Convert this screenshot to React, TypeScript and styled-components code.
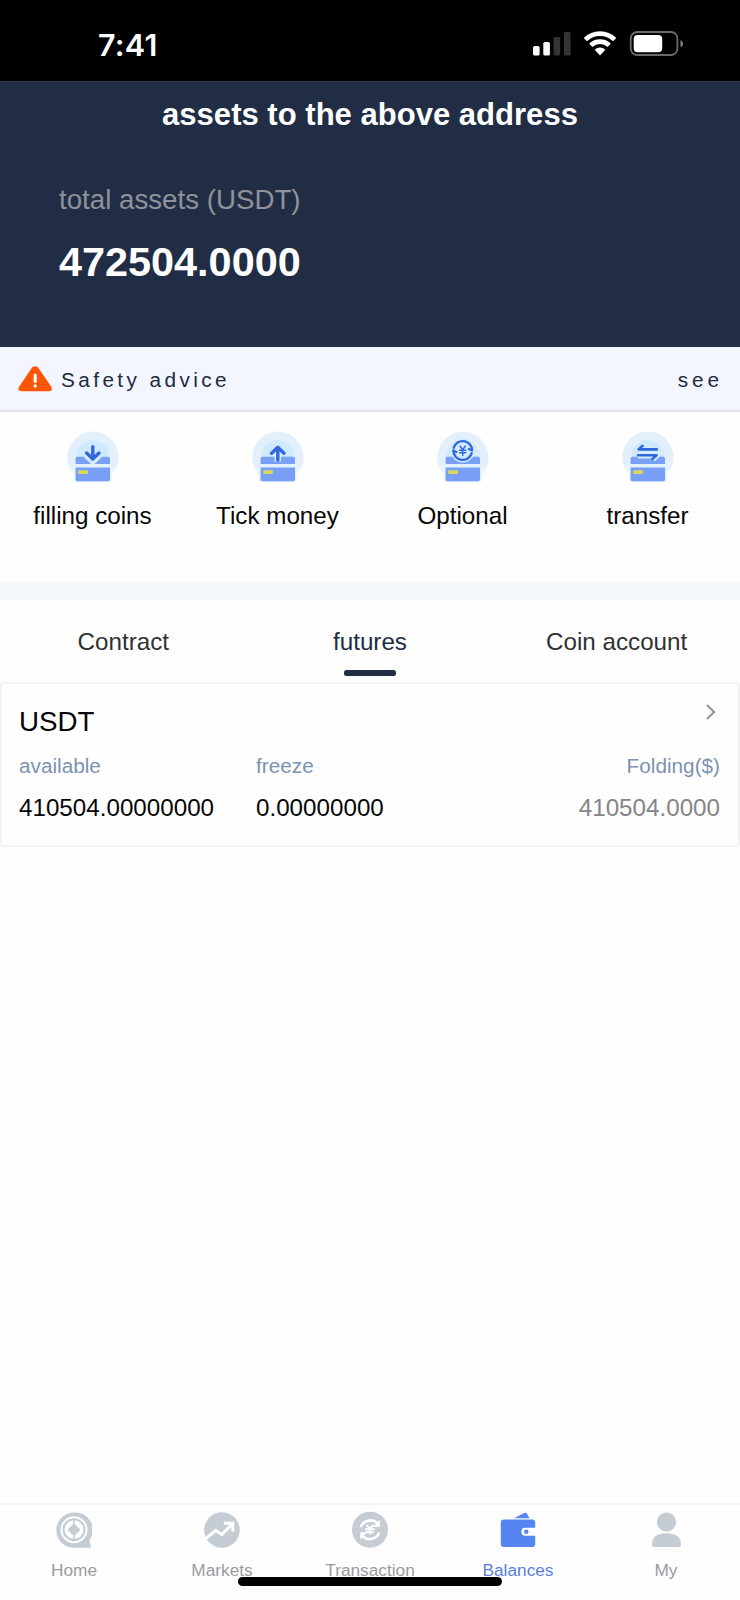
import React from "react";
import styled, { createGlobalStyle } from "styled-components";

const GlobalStyle = createGlobalStyle`
  * { box-sizing: border-box; }
  body {
    margin: 0;
    background: #fefefe;
    font-family: "Liberation Sans", Arial, sans-serif;
    -webkit-font-smoothing: antialiased;
  }
`;

const Screen = styled.div`
  width: 740px;
  height: 1600px;
  display: flex;
  flex-direction: column;
  overflow: hidden;
  background: #fefefe;
`;

const StatusBar = styled.div`
  height: 81px;
  flex: none;
  display: flex;
  justify-content: space-between;
  padding: 25px 55px 0 98px;
  background: #000;
`;

const Clock = styled.div`
  font: 600 30.5px/39px Inter, sans-serif;
  letter-spacing: 0.3px;
  color: #fff;
`;

const StatusIcons = styled.div`
  display: flex;
  padding-top: 5px;
  gap: 11px;
`;

const Header = styled.header`
  height: 266px;
  flex: none;
  background: #212d44;
  border-top: 1px solid #2d3344;
`;

const Title = styled.h1`
  margin: 0;
  font-size: 31.05px;
  line-height: 65px;
  font-weight: 700;
  text-align: center;
  color: #fff;
`;

const Total = styled.div`
  padding: 32px 59px 0;
`;

const TotalLabel = styled.div`
  font-size: 27.7px;
  line-height: 42px;
  color: #8f929b;
`;

const TotalValue = styled.div`
  margin-top: 11px;
  font-size: 41.4px;
  line-height: 60px;
  font-weight: 700;
  color: #fff;
`;

const Advice = styled.div`
  height: 65px;
  flex: none;
  display: flex;
  align-items: center;
  padding: 3px 17px 0 18px;
  background: #f3f5ff;
  border-bottom: 2px solid #e1e2e6;
  font-size: 20.75px;
  color: #212b40;

  svg { margin-bottom: 2px; }
`;

const AdviceText = styled.span`
  flex: 1;
  padding-left: 8px;
  letter-spacing: 3.42px;
`;

const AdviceLink = styled.span`
  letter-spacing: 3.9px;
`;

const Actions = styled.div`
  height: 170px;
  flex: none;
  display: grid;
  grid-template-columns: repeat(4, 1fr);
  padding-top: 17px;
`;

const Action = styled.div`
  display: flex;
  flex-direction: column;
  align-items: center;
  font-size: 24.2px;
  line-height: 34px;
  color: #060606;
  gap: 14px;
`;

const Strip = styled.div`
  height: 18px;
  flex: none;
  background: #f3f7fa;
`;

const Tabs = styled.div`
  height: 82px;
  flex: none;
  display: grid;
  grid-template-columns: repeat(3, 1fr);
`;

const Tab = styled.div<{ $active?: boolean }>`
  display: flex;
  flex-direction: column;
  align-items: center;
  padding-top: 25px;
  font-size: 24.2px;
  line-height: 34px;
  color: ${(p) => (p.$active ? "#212d44" : "#303133")};

  &::after {
    content: "";
    width: 52px;
    height: 6px;
    margin-top: 11px;
    border-radius: 2.5px;
    background: ${(p) => (p.$active ? "#212d44" : "transparent")};
  }
`;

const Card = styled.section`
  height: 165px;
  flex: none;
  padding: 19px 18px 0 17px;
  border: 2px solid #f3f3f4;
  border-radius: 4px;
`;

const CardHead = styled.div`
  display: flex;
  justify-content: space-between;
  height: 41.5px;
  font-size: 27.7px;
  line-height: 38px;
  color: #060606;

  svg { margin: -1px 3px 0 0; }
`;

const Figures = styled.div`
  display: grid;
  grid-template-columns: 237px 1fr auto;
`;

const Figure = styled.div<{ $end?: boolean }>`
  font-size: 24.2px;
  line-height: 42px;
  text-align: ${(p) => (p.$end ? "right" : "left")};
  color: ${(p) => (p.$end ? "#858587" : "#060606")};
`;

const FigureLabel = styled.div`
  font-size: 20.75px;
  color: #7d93b0;
`;

const Nav = styled.nav`
  height: 97px;
  flex: none;
  margin-top: auto;
  position: relative;
  display: grid;
  grid-template-columns: repeat(5, 1fr);
  border-top: 2px solid #f3f4f5;
`;

const NavItem = styled.div<{ $active?: boolean }>`
  display: flex;
  flex-direction: column;
  align-items: center;
  padding-top: 6px;
  gap: 10.5px;
  font-size: 17.25px;
  line-height: 20px;
  color: ${(p) => (p.$active ? "#5a7fe0" : "#9b9b9e")};
`;

const HomeIndicator = styled.div`
  position: absolute;
  left: 238px;
  bottom: 14px;
  width: 264px;
  height: 9px;
  border-radius: 5px;
  background: #000;
`;

const Signal = () => (
  <svg width="40" height="28" viewBox="0 0 40 28">
    <rect x="1" y="16" width="6.6" height="9.5" rx="1.6" fill="#fff" />
    <rect x="11.3" y="12" width="6.6" height="13.5" rx="1.6" fill="#fff" />
    <rect x="21.6" y="7" width="6.6" height="18.5" rx="1.6" fill="#343434" />
    <rect x="32" y="2" width="6.6" height="23.5" rx="1.6" fill="#343434" />
  </svg>
);

const Wifi = () => (
  <svg width="34" height="28" viewBox="0 0 34 28">
    <g fill="none" stroke="#fff" strokeWidth="4.7">
      <path d="M2.3 9.6a21 21 0 0 1 29.4 0" />
      <path d="M7.8 15.3a13.2 13.2 0 0 1 18.4 0" />
    </g>
    <path d="M11.7 19.7a7.7 7.7 0 0 1 10.6 0L17 25.4z" fill="#fff" />
  </svg>
);

const Battery = () => (
  <svg width="57" height="28" viewBox="0 0 57 28">
    <rect x="2.7" y="2" width="46.7" height="23" rx="6.5" fill="none" stroke="#6b6b6b" strokeWidth="1.8" />
    <rect x="5.7" y="5" width="28.5" height="17.3" rx="4" fill="#fff" />
    <path d="M52.5 10.300c3.500 1.200 3.500 5.800 0 7z" fill="#7c7c7c" />
  </svg>
);

const Warning = () => (
  <svg width="35" height="26" viewBox="0 0 35 26">
    <path d="M14 1.6q3-2.8 6 0L33.1 20.5q2.3 4.5-2.6 4.7H3.8q-5.2-.2-2.5-4.7z" fill="#fb5607" />
    <path d="M17.2 9v6.5" stroke="#fff" strokeWidth="3.1" strokeLinecap="round" />
    <circle cx="17.2" cy="20" r="1.7" fill="#fff" />
  </svg>
);

type Kind = "down" | "up" | "yen" | "swap";

const ActionIcon = ({ kind }: { kind: Kind }) => {
  const glyphs: Record<Kind, React.ReactNode> = {
    down: <path d="M28.4 17.8v12M22.2 24l6.2 6 6.2-6" />,
    up: <path d="M28.4 31V18.3M22.2 24.2l6.2-6 6.2 6" />,
    yen: (
      <>
        <path d="M19.3 18.8A9.4 9.4 0 0 1 37.7 21.5L34.6 20M37.3 24.2A9.4 9.4 0 0 1 18.9 21.5L22 23" strokeWidth="2.3" />
        <path d="M25.7 17.2l2.6 3.4 2.6-3.4M28.3 20.6v5.9M25.2 21.3h6.2M25.2 23.8h6.2" strokeWidth="1.5" />
      </>
    ),
    swap: <path d="M37.5 20.4H19.2l4-3.6M18.7 26.3H37.2l-4 3.4" strokeWidth="2.6" />,
  };
  const halos: Record<Kind, React.ReactNode> = {
    down: <path d="M21.4 25.5l7 6.7 7-6.7" />,
    up: <path d="M28.4 25v7.5" />,
    yen: <circle cx="28.3" cy="21.5" r="12" fill="#d3ebff" stroke="none" />,
    swap: <path d="M18.5 26.3h18.7l-4 3.6" />,
  };
  const id = `halo-${kind}`;
  return (
    <svg width="56" height="56" viewBox="0.6 0 56 56">
      <defs>
        <linearGradient id={id} x1="0" y1="0" x2="0" y2="1">
          <stop offset="0.65" stopColor="#e3f0fc" />
          <stop offset="1" stopColor="#e3f0fc" stopOpacity="0" />
        </linearGradient>
      </defs>
      <circle cx="28.5" cy="28.3" r="25.7" fill={`url(#${id})`} />
      <circle cx="28.4" cy="27.5" r="16.5" fill="#cfeaff" />
      <rect x="9.9" y="34" width="37" height="19.3" rx="2" fill="#e3f1ff" />
      <path d="M11.2 29.4q0-1.6 1.6-1.6h31.2q1.6 0 1.6 1.6V35H11.2z" fill="#78a0f6" />
      <path d="M11.2 38.6h34.4v11.8q0 1.8-1.8 1.8H13q-1.8 0-1.8-1.8z" fill="#789ff5" />
      <rect x="13.8" y="41.2" width="9.8" height="3.8" rx="1" fill="#dbd95c" />
      <g fill="none" stroke="#d6ecff" strokeWidth="6.5">{halos[kind]}</g>
      <g fill="none" stroke="#3169dc" strokeWidth="3.4" strokeLinecap="round" strokeLinejoin="round">
        {glyphs[kind]}
      </g>
    </svg>
  );
};

const Chevron = () => (
  <svg width="12" height="20" viewBox="0 0 12 20">
    <path d="M2 3l7 7-7 7" fill="none" stroke="#97989b" strokeWidth="2.2" />
  </svg>
);

const grey = "#c5ccd4";

const HomeIcon = () => (
  <svg width="36" height="38" viewBox="0 0 36 38">
    <path d="M18 1.5a17.5 17.5 0 1 0 0 35.3h17l-1.5-7.5A17.5 17.5 0 0 0 18 1.5z" fill={grey} />
    <circle cx="18" cy="18.7" r="12.5" fill="none" stroke="#fff" strokeWidth="2" />
    <circle cx="18" cy="18.7" r="9.4" fill="#fff" />
    <path d="M18 12.2l6.500 6.500-6.500 6.500-6.500-6.500z" fill={grey} />
    <path d="M18 9v4M18 24.400v4" stroke={grey} strokeWidth="1.600" />
  </svg>
);

const MarketsIcon = () => (
  <svg width="36" height="38" viewBox="0 0 36 38">
    <circle cx="18" cy="19" r="17.8" fill={grey} />
    <path d="M2 27.3l9.8-8 6 4.2L28 13.2M19.8 12.2h9v8.2" fill="none" stroke="#fff" strokeWidth="3" />
  </svg>
);

const TransactionIcon = () => (
  <svg width="36" height="38" viewBox="0 0 36 38">
    <circle cx="18" cy="18.7" r="18" fill={grey} />
    <path d="M8.8 16.2C11 9.7 19.8 7 25.5 12.2M27.3 21.5C25 28 16.2 30.3 10.5 25.4" fill="none" stroke="#fff" strokeWidth="2.6" />
    <path d="M27.8 8.8v7.3h-7zM8.3 28.5v-7.3h7z" fill="#fff" />
    <path d="M14.5 14l3.5 3.6 3.5-3.6M18 17.6v6M13 18.2h10M14 21.2h8" fill="none" stroke="#fff" strokeWidth="2" />
  </svg>
);

const BalancesIcon = () => (
  <svg width="36" height="38" viewBox="0 0 36 38">
    <path d="M14 7.3L24.2 2q2-.8 3 1l2.2 4.3z" fill="#5585ef" />
    <path
      d="M4 8.6h28.2q3 0 3 3v5.2H25.3q-4 0-4 4t4 4h9.9v8.3q0 3-3 3H4q-3.2 0-3.2-3V11.6q0-3 3.2-3z"
      fill="#5585ef"
    />
    <circle cx="26.3" cy="20.8" r="2.2" fill="#5585ef" />
  </svg>
);

const MyIcon = () => (
  <svg width="36" height="38" viewBox="0 0 36 38">
    <circle cx="18.5" cy="11" r="9.6" fill={grey} />
    <path d="M4 33.5C4 26 9 22.3 18.3 22.3S33 26 33 33.5q0 2.5-2.2 2.5H6.2Q4 36 4 33.5z" fill={grey} />
  </svg>
);

const actions: { kind: Kind; label: string }[] = [
  { kind: "down", label: "filling coins" },
  { kind: "up", label: "Tick money" },
  { kind: "yen", label: "Optional" },
  { kind: "swap", label: "transfer" },
];

const navItems = [
  { label: "Home", Icon: HomeIcon },
  { label: "Markets", Icon: MarketsIcon },
  { label: "Transaction", Icon: TransactionIcon },
  { label: "Balances", Icon: BalancesIcon, active: true },
  { label: "My", Icon: MyIcon },
];

export default function App() {
  return (
    <>
      <GlobalStyle />
      <Screen>
        <StatusBar>
          <Clock>7:41</Clock>
          <StatusIcons>
            <Signal />
            <Wifi />
            <Battery />
          </StatusIcons>
        </StatusBar>
        <Header>
          <Title>assets to the above address</Title>
          <Total>
            <TotalLabel>total assets (USDT)</TotalLabel>
            <TotalValue>472504.0000</TotalValue>
          </Total>
        </Header>
        <Advice>
          <Warning />
          <AdviceText>Safety advice</AdviceText>
          <AdviceLink>see</AdviceLink>
        </Advice>
        <Actions>
          {actions.map((a) => (
            <Action key={a.kind}>
              <ActionIcon kind={a.kind} />
              {a.label}
            </Action>
          ))}
        </Actions>
        <Strip />
        <Tabs>
          <Tab>Contract</Tab>
          <Tab $active>futures</Tab>
          <Tab>Coin account</Tab>
        </Tabs>
        <Card>
          <CardHead>
            USDT
            <Chevron />
          </CardHead>
          <Figures>
            <Figure>
              <FigureLabel>available</FigureLabel>
              410504.00000000
            </Figure>
            <Figure>
              <FigureLabel>freeze</FigureLabel>
              0.00000000
            </Figure>
            <Figure $end>
              <FigureLabel>Folding($)</FigureLabel>
              410504.0000
            </Figure>
          </Figures>
        </Card>
        <Nav>
          {navItems.map(({ label, Icon, active }) => (
            <NavItem key={label} $active={active}>
              <Icon />
              {label}
            </NavItem>
          ))}
          <HomeIndicator />
        </Nav>
      </Screen>
    </>
  );
}
